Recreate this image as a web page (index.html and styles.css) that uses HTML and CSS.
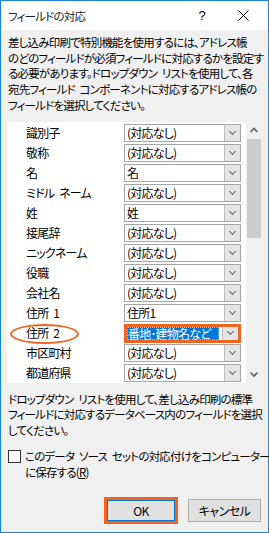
FILE: index.html
```html
<!DOCTYPE html>
<html lang="ja">
<head>
  <meta charset="UTF-8">
  <title>フィールドの対応</title>
  <link rel="stylesheet" href="styles.css">
</head>
<body>
  <div class="window">
    <div class="titlebar">
      <span class="title">フィールドの対応</span>
      <span class="help">?</span>
      <svg class="close" width="11" height="11" viewBox="0 0 11 11"><path d="M0.5 0.5 L10.5 10.5 M10.5 0.5 L0.5 10.5" stroke="#000" stroke-width="1" fill="none"/></svg>
    </div>
    <div class="content">
      <p class="intro">差し込み印刷で特別機能を使用するには、アドレス帳<br>のどのフィールドが必須フィールドに対応するかを設定す<br>る必要があります。ドロップダウン リストを使用して、各<br>宛先フィールド コンポーネントに対応するアドレス帳の<br>フィールドを選択してください。</p>

      <div class="fieldlist">
        <div class="rows">
          <span class="label">識別子</span><div class="combo"><span class="value">(対応なし)</span><span class="drop"></span></div>
          <span class="label">敬称</span><div class="combo"><span class="value">(対応なし)</span><span class="drop"></span></div>
          <span class="label">名</span><div class="combo"><span class="value">名</span><span class="drop"></span></div>
          <span class="label">ミドル ネーム</span><div class="combo"><span class="value">(対応なし)</span><span class="drop"></span></div>
          <span class="label">姓</span><div class="combo"><span class="value">姓</span><span class="drop"></span></div>
          <span class="label">接尾辞</span><div class="combo"><span class="value">(対応なし)</span><span class="drop"></span></div>
          <span class="label">ニックネーム</span><div class="combo"><span class="value">(対応なし)</span><span class="drop"></span></div>
          <span class="label">役職</span><div class="combo"><span class="value">(対応なし)</span><span class="drop"></span></div>
          <span class="label">会社名</span><div class="combo"><span class="value">(対応なし)</span><span class="drop"></span></div>
          <span class="label">住所 1</span><div class="combo"><span class="value">住所1</span><span class="drop"></span></div>
          <span class="label marked">住所 2</span><div class="combo selected"><span class="value">番地･建物名など</span><span class="drop"></span></div>
          <span class="label">市区町村</span><div class="combo"><span class="value">(対応なし)</span><span class="drop"></span></div>
          <span class="label">都道府県</span><div class="combo"><span class="value">(対応なし)</span><span class="drop"></span></div>
        </div>
        <div class="scrollbar">
          <svg class="arrow" width="16" height="17" viewBox="0 0 16 17"><path d="M4.5 10 L8 6.5 L11.5 10" stroke="#606060" stroke-width="1.6" fill="none"/></svg>
          <div class="thumb"></div>
          <div class="track"></div>
          <svg class="arrow" width="16" height="17" viewBox="0 0 16 17"><path d="M4.5 6.5 L8 10 L11.5 6.5" stroke="#606060" stroke-width="1.6" fill="none"/></svg>
        </div>
      </div>

      <p class="note">ドロップダウン リストを使用して、差し込み印刷の標準<br>フィールドに対応するデータベース内のフィールドを選択<br>してください。</p>

      <div class="save">
        <span class="checkbox"></span>
        <span class="save-text">このデータ ソース セットの対応付けをコンピューター<br>に保存する(<u>R</u>)</span>
      </div>

      <div class="buttons">
        <button class="btn ok">OK</button>
        <button class="btn">キャンセル</button>
      </div>
    </div>
  </div>
</body>
</html>
```

FILE: styles.css
```css
body {
  margin: 0;
  font-family: "Noto Sans CJK JP", "Noto Sans", sans-serif;
  font-size: 11.5px;
  letter-spacing: -0.8px;
  word-spacing: 3px;
  color: #000;
  font-feature-settings: "palt";
}
.window {
  width: 269px;
  height: 533px;
  box-sizing: border-box;
  border: 1px solid #1883d7;
  background-color: #f0f0f0;
  display: flex;
  flex-direction: column;
}
.titlebar {
  height: 29px;
  background-color: #fff;
  display: flex;
  align-items: center;
  padding-left: 7px;
}
.title {
  flex-grow: 1;
  color: #222;
}
.help {
  font-family: "Liberation Sans", sans-serif;
  font-size: 13px;
  margin-right: 33px;
}
.close {
  margin-right: 19px;
}
.content {
  padding: 5px 5px 0 6px;
}
p {
  margin: 0;
  line-height: 15.7px;
  white-space: nowrap;
}
.intro {
  margin-left: 1px;
}
.fieldlist {
  display: flex;
  margin-top: 8px;
  height: 261px;
}
.rows {
  width: 239px;
  background-color: #fff;
  display: grid;
  grid-template-columns: 98px 117px;
  grid-auto-rows: 18px;
  row-gap: 2px;
  padding: 2px 0 0 19px;
  box-sizing: border-box;
  align-items: center;
}
.label {
  position: relative;
  line-height: 18px;
  font-size: 12px;
}
.label.marked::before {
  content: "";
  position: absolute;
  left: -16px;
  top: 0;
  width: 65px;
  height: 16px;
  border: 2px solid #f0641e;
  border-radius: 50%;
}
.combo {
  height: 18px;
  box-sizing: border-box;
  border: 1px solid #a6a6a6;
  display: flex;
  align-items: stretch;
  background-color: #fff;
}
.value {
  flex-grow: 1;
  padding-left: 2px;
  line-height: 16px;
  font-size: 12px;
}
.drop {
  width: 15px;
  background-color: #e5e5e5;
  border-left: 1px solid #bcbcbc;
  position: relative;
}
.drop::after {
  content: "";
  position: absolute;
  left: 5px;
  top: 4px;
  width: 4px;
  height: 4px;
  border-right: 1px solid #666;
  border-bottom: 1px solid #666;
  transform: rotate(45deg);
}
.combo.selected {
  border: 3px solid #f0641e;
  height: 19px;
  margin-top: 1px;
}
.combo.selected .value {
  background-color: #0078d7;
  color: #fff;
  margin: 0 3px 0 0;
  padding-left: 1px;
  line-height: 13px;
  outline: 1px dotted #9cc8ee;
  outline-offset: -1px;
}
.combo.selected .drop::after {
  top: 2px;
}
.scrollbar {
  width: 16px;
  display: flex;
  flex-direction: column;
}
.thumb {
  height: 99px;
  background-color: #cdcdcd;
  margin: 0 1px;
}
.track {
  flex-grow: 1;
}
.note {
  margin-top: 9px;
  margin-left: 1px;
}
.save {
  display: flex;
  align-items: flex-start;
  margin-top: 9px;
}
.checkbox {
  flex-shrink: 0;
  width: 13px;
  height: 13px;
  box-sizing: border-box;
  border: 1px solid #333;
  background-color: #fff;
  margin: 2px 4px 0 1px;
}
.save-text {
  line-height: 16px;
  white-space: nowrap;
}
.buttons {
  display: flex;
  justify-content: flex-end;
  align-items: center;
  gap: 10px;
  margin-top: 17px;
  padding-right: 2px;
}
.btn {
  width: 73px;
  height: 23px;
  font-family: inherit;
  font-size: 12px;
  letter-spacing: -0.5px;
  font-feature-settings: "palt";
  background-color: #e1e1e1;
  border: 1px solid #adadad;
  padding: 0;
  color: #000;
}
.btn.ok {
  width: 74px;
  height: 27px;
  border: 3px solid #f0641e;
  box-shadow: inset 0 0 0 1px #0078d7;
}
```
